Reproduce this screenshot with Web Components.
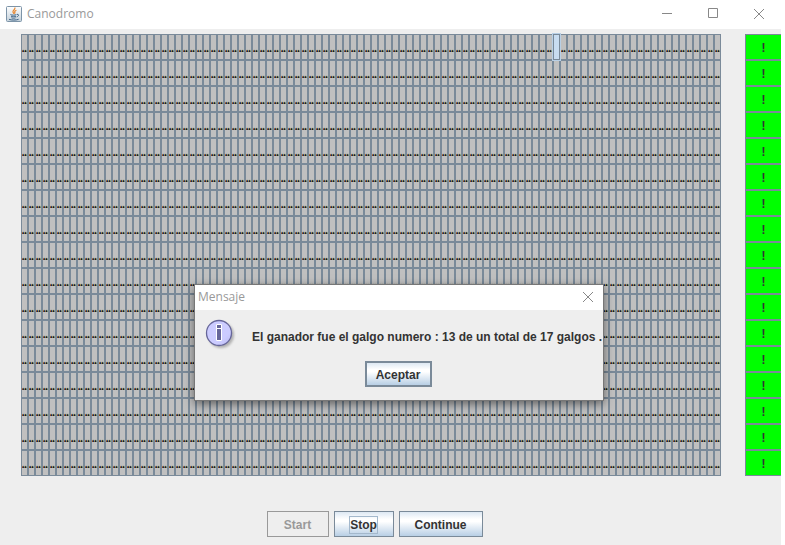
<!DOCTYPE html>
<html lang="es">
<head>
<meta charset="utf-8">
<title>Canodromo</title>
<style>
html, body { height: 100%; margin: 0; }
body { background: #fff; font-family: "Liberation Sans", Arial, sans-serif; font-size: 12px; color: #333; overflow: hidden; }
</style>
</head>
<body>
<canodromo-app></canodromo-app>
<script>
const make = (name, html, setup) => {
  const t = document.createElement('template');
  t.innerHTML = html;
  customElements.define(name, class extends HTMLElement {
    constructor() {
      super();
      this.attachShadow({ mode: 'open' }).append(t.content.cloneNode(true));
    }
    connectedCallback() { if (setup) setup(this, this.shadowRoot); }
  });
};

make('java-icon', `
<style>:host { display: block; width: 16px; height: 16px; } svg { display: block; }</style>
<svg width="16" height="16" viewBox="0 0 16 16" aria-hidden="true">
  <defs><linearGradient id="g" x2="0" y2="1"><stop stop-color="#fff"/><stop offset="1" stop-color="#c3d0da"/></linearGradient></defs>
  <rect x=".5" y=".5" width="15" height="15" rx="1" fill="url(#g)" stroke="#7d94a8"/>
  <path d="M8.800 1.500c1.200 2-2.600 2.800-1.800 4.600.3.8.9 1.100 1 1.900M10.400 4.200C8.600 5 8.200 6 9.200 7.400" fill="none" stroke="#e8862e" stroke-width="1.200"/>
  <path d="M4.400 8.600c1.500.7 4.600.7 6 0M5 10.200c1.500.6 3.500.6 5 0M5.400 11.800c1.300.5 3 .5 4.200 0M11 8.400c2.200-.4 2 1.800-.3 2.500M3 13.300c2.500 1 7 1 9.600 0" fill="none" stroke="#3f6487" stroke-width="1"/>
</svg>`);

make('window-control', `
<style>
:host { display: block; width: 46px; height: 100%; }
button { display: grid; place-items: center; box-sizing: border-box; width: 100%; height: 100%; border: 0; padding: 0 0 2px; background: none; }
svg { display: block; fill: none; stroke: #888; }
</style>
<button type="button"><svg width="12" height="12" viewBox="0 0 12 12"><path/></svg></button>`,
(host, root) => {
  const kind = host.getAttribute('kind');
  const shapes = { minimizar: 'M1 5.5h10', maximizar: 'M1.5 .5h9v9h-9z', cerrar: 'M1 1l10 10M11 1L1 11' };
  root.querySelector('path').setAttribute('d', shapes[kind]);
  root.querySelector('button').setAttribute('aria-label', kind);
});

make('title-bar', `
<style>
:host { display: flex; align-items: center; background: #fff; color: #999; font-family: "Open Sans", "Noto Sans", sans-serif; font-size: 12px; line-height: 16px; }
.name { flex: 1; display: flex; align-items: center; gap: 5px; padding-bottom: 2px; }
.controls { display: flex; height: 100%; }
</style>
<div class="name"><slot name="icon"></slot><span><slot></slot></span></div>
<div class="controls"><slot name="controls"></slot></div>`);

make('metal-button', `
<style>
:host { display: block; }
button { display: block; box-sizing: border-box; width: 100%; height: 26px; padding: 2px 8px 0; border: 1px solid #7a8a99; background: linear-gradient(#dde8f3, #fff 30%, #fff 40%, #b8cfe5); color: #333; font: bold 12px/16px "Liberation Sans", Arial, sans-serif; }
:host([strong]) button { border-width: 2px; padding: 1px 7px 0; }
button:disabled { border-color: #999; background: #eee; color: #999; }
:host([focused]) span { padding: 1px 0; box-shadow: 0 0 0 1px #a3b8cc; }
</style>
<button type="button"><span><slot></slot></span></button>`,
(host, root) => { root.querySelector('button').disabled = host.hasAttribute('disabled'); });

make('race-lane', `
<style>
:host { display: grid; grid-template-columns: repeat(100, minmax(0, 7px)); height: 26px; }
button { min-width: 0; overflow: hidden; margin: 0; padding: 6px 0 0; border: 1px solid #7a8a99; background: #c0c0c0; color: #111; font: bold 8px/12px "Liberation Sans", Arial, sans-serif; text-shadow: 0 -1px #222, 0 0 #222; }
button.dog { background: #c8dcf0; box-shadow: 0 0 0 1px #b8cfe5; position: relative; color: transparent; text-shadow: none; }
</style>`,
(host, root) => {
  const dog = Number(host.getAttribute('dog'));
  for (let i = 1; i <= 100; i++) {
    const b = document.createElement('button');
    b.type = 'button';
    b.textContent = '...';
    if (i === dog) b.className = 'dog';
    root.append(b);
  }
});

make('lane-goal', `
<style>
:host { display: block; height: 26px; }
button { box-sizing: border-box; width: 100%; height: 100%; padding: 2px 0 0; border: 1px solid #7a8a99; border-right: 0; background: #0f0; color: #333; font: bold 12px/16px "Liberation Sans", Arial, sans-serif; }
</style>
<button type="button">!</button>`);

make('race-track', `
<style>
:host { display: flex; justify-content: space-between; }
.lanes { flex: 0 1 700px; }
.goals { flex: 0 0 36px; }
</style>
<div class="lanes"></div><div class="goals"></div>`,
(host, root) => {
  for (let i = 0; i < 17; i++) {
    const lane = document.createElement('race-lane');
    if (i === 0) lane.setAttribute('dog', '77');
    root.querySelector('.lanes').append(lane);
    root.querySelector('.goals').append(document.createElement('lane-goal'));
  }
});

make('info-icon', `
<style>:host { display: block; width: 32px; height: 32px; } svg { display: block; }</style>
<svg width="32" height="32" viewBox="0 0 32 32" role="img" aria-label="info">
  <defs>
    <linearGradient id="f" x2="1" y2="1"><stop stop-color="#ccf"/><stop offset=".7" stop-color="#ccf"/><stop offset="1" stop-color="#b8b8f0"/></linearGradient>
    <filter id="s" x="-20%" y="-20%" width="150%" height="150%"><feGaussianBlur stdDeviation="1"/></filter>
  </defs>
  <circle cx="16" cy="16" r="13" fill="#999" opacity=".7" filter="url(#s)"/>
  <circle cx="14" cy="14" r="12.500" fill="url(#f)" stroke="#669" stroke-width="1.300"/>
  <path d="M11.500 5.500h5v4h-5zM11.500 9.500h5v12h-5z" fill="#669" stroke="#fff"/>
</svg>`);

make('message-dialog', `
<style>
:host { display: block; box-sizing: border-box; background: #eee; border: 1px solid #777; box-shadow: 0 3px 9px rgba(0,0,0,.5); }
title-bar { height: 25px; padding-left: 3px; }
window-control { width: 30px; }
.message { display: flex; align-items: center; gap: 15px; padding: 9px 9px 0 10px; font: bold 12px/16px "Liberation Sans", Arial, sans-serif; color: #333; white-space: nowrap; }
.text { padding-top: 4px; }
.actions { display: flex; justify-content: center; padding: 10px 2px 13px 0; }
metal-button { width: 67px; }
</style>
<title-bar>Mensaje<window-control slot="controls" kind="cerrar"></window-control></title-bar>
<div class="message"><info-icon></info-icon><div class="text"><slot></slot></div></div>
<div class="actions"><metal-button strong>Aceptar</metal-button></div>`);

make('canodromo-app', `
<style>
:host { display: flex; flex-direction: column; height: 100%; position: relative; }
title-bar { flex: 0 0 29px; padding: 0 3px 0 6px; box-sizing: border-box; }
main { flex: 1; margin-right: 4px; padding: 5px 0 0 21px; background: #eee; }
.buttons { display: flex; justify-content: center; gap: 5px; padding: 35px 53px 0 0; }
.start { width: 62px; } .stop { width: 60px; } .continue { width: 84px; }
message-dialog { position: absolute; left: 194px; top: 284px; width: 410px; }
</style>
<title-bar><java-icon slot="icon"></java-icon>Canodromo
  <window-control slot="controls" kind="minimizar"></window-control>
  <window-control slot="controls" kind="maximizar"></window-control>
  <window-control slot="controls" kind="cerrar"></window-control>
</title-bar>
<main>
  <race-track></race-track>
  <div class="buttons">
    <metal-button class="start" disabled>Start</metal-button>
    <metal-button class="stop" focused>Stop</metal-button>
    <metal-button class="continue">Continue</metal-button>
  </div>
</main>
<message-dialog role="dialog" aria-label="Mensaje">El ganador fue el galgo numero : 13 de un total de 17 galgos .</message-dialog>`);
</script>
</body>
</html>
